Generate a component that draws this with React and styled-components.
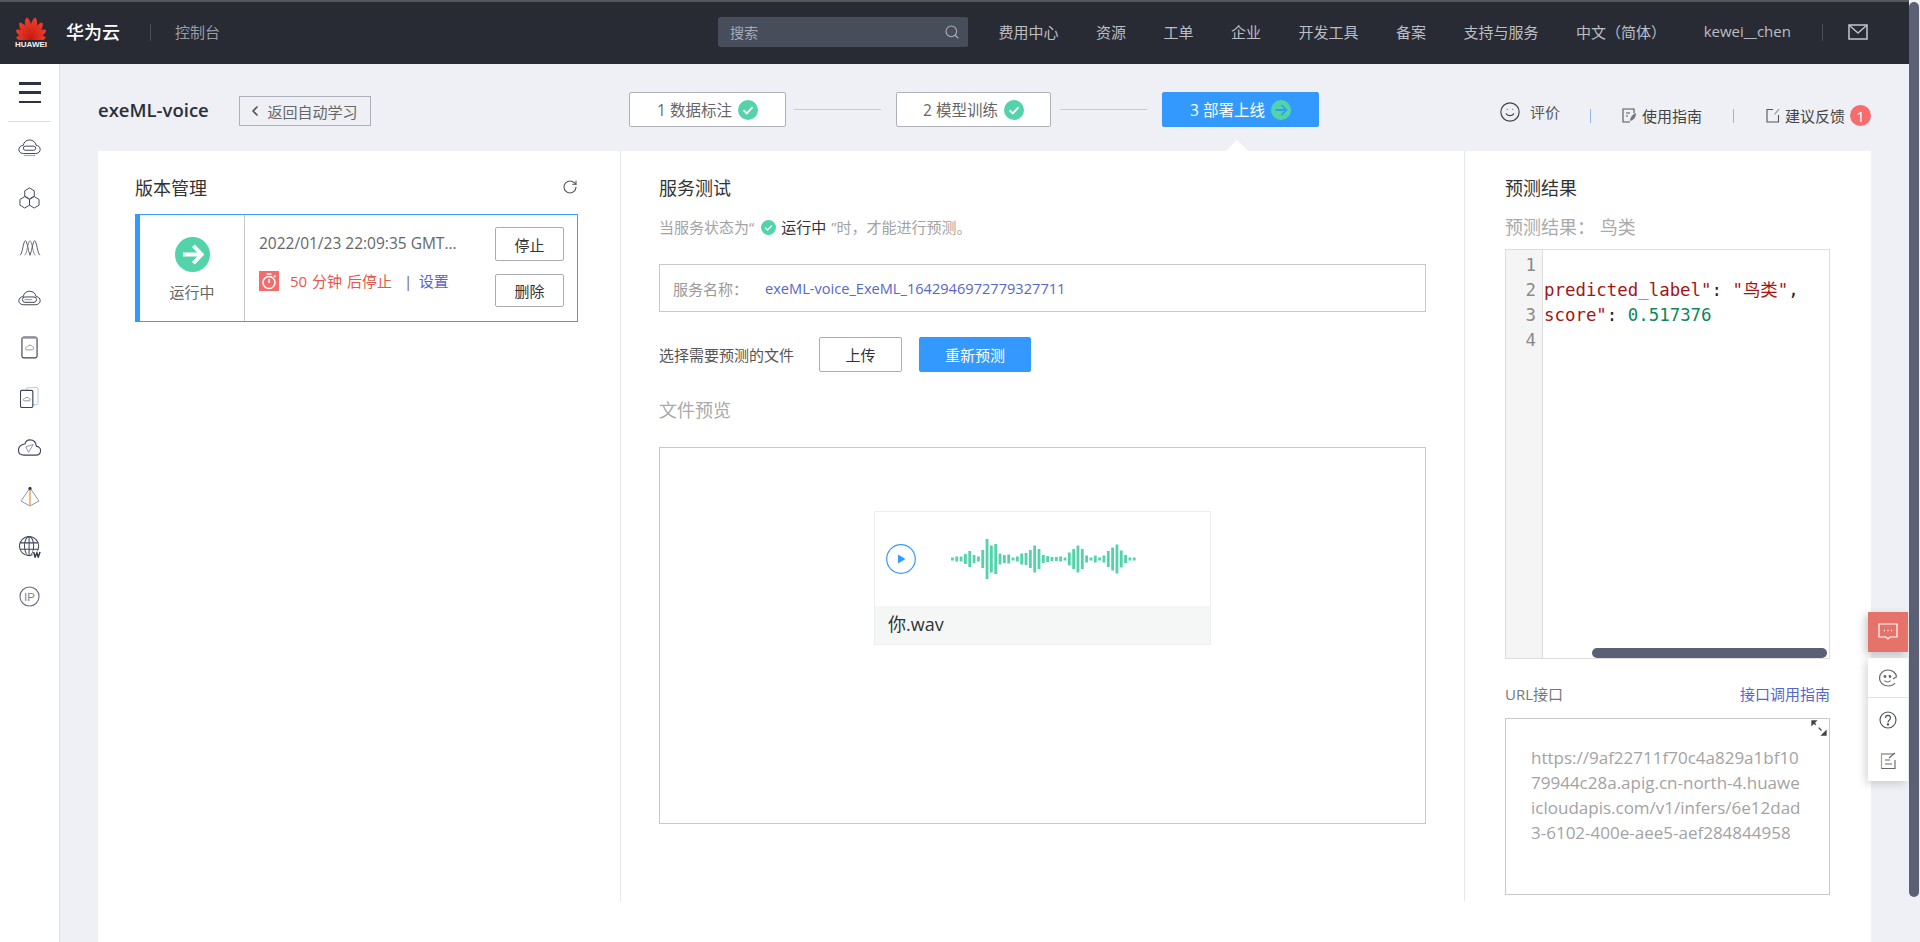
import React from "react";
import styled, { createGlobalStyle } from "styled-components";
import { ChevronLeft, RotateCw, Search, Smile } from "lucide-react";

const Global = createGlobalStyle`
  html, body { margin: 0; padding: 0; height: 942px; overflow: hidden; background: #eef0f5; }
  * { box-sizing: border-box; }
  body { font-family: "Open Sans", "Noto Sans CJK SC", sans-serif; font-size: 15px; color: #333; }
`;

const Frame = styled.div`
  display: flex;
  width: 1920px;
  height: 942px;
  overflow: hidden;
  background: #eef0f5;
`;
const Page = styled.div`
  width: 1909px;
  display: flex;
  flex-direction: column;
`;
const ScrollTrack = styled.div`
  width: 11px;
  padding: 2px 1px 0 0;
  background: #eef0f5;
`;
const ScrollThumb = styled.div`
  height: 895px;
  border-radius: 5px;
  background: #5b6074;
`;

/* top bar */
const TopBar = styled.header`
  height: 64px;
  flex: none;
  display: flex;
  align-items: center;
  background: #282b34;
  border-top: 2px solid #56585c;
  padding: 0 0 2px 15px;
  color: #bcbec4;
  font-size: 15px;
`;
const LogoBox = styled.div`
  width: 32px;
  display: flex;
  flex-direction: column;
  align-items: center;
  color: #f2f2f2;
  font-family: "Liberation Sans", sans-serif;
  font-size: 8px;
  font-weight: 700;
  line-height: 9px;
`;
const Brand = styled.div`
  margin: 0 0 2px 19px;
  width: 56px;
  color: #fff;
  font-size: 18px;
  font-weight: 500;
`;
const TopSep = styled.i`
  width: 1px;
  height: 17px;
  background: #4d505a;
  margin-left: ${(p) => p.$ml || 0}px;
`;
const Console = styled.div`
  margin: 0 0 2px 24px;
  width: 543px;
  color: #9a9ca3;
`;
const SearchBox = styled.div`
  width: 250px;
  height: 30px;
  display: flex;
  align-items: center;
  justify-content: space-between;
  padding: 0 8px 0 12px;
  background: #484d5c;
  border-radius: 2px;
  color: #a6aab5;
  font-size: 14px;
`;
const NavItems = styled.nav`
  display: flex;
  margin: 0 0 2px 30.5px;
  gap: 37.5px;
  white-space: nowrap;
`;
const MailWrap = styled.div`
  margin-left: 25px;
  display: flex;
`;

/* body */
const Body = styled.div`
  flex: 1;
  display: flex;
  min-height: 0;
`;
const Sidebar = styled.aside`
  width: 60px;
  flex: none;
  background: #fff;
  border-right: 1px solid #dcdfe6;
  display: flex;
  flex-direction: column;
  align-items: center;
`;
const Burger = styled.div`
  width: 22px;
  height: 21px;
  margin-top: 18px;
  display: flex;
  flex-direction: column;
  justify-content: space-between;
  i { display: block; height: 2.5px; background: #2c3145; }
`;
const SideRule = styled.div`
  width: 43px;
  height: 1px;
  margin-top: 18px;
  background: #dedfe3;
`;
const SideIcons = styled.div`
  display: flex;
  flex-direction: column;
  align-items: center;
  margin-top: 1px;
`;
const SideIcon = styled.div`
  height: 49.9px;
  display: flex;
  align-items: center;
  justify-content: center;
`;
const Main = styled.main`
  flex: 1;
  padding: 0 38px;
  display: flex;
  flex-direction: column;
  min-width: 0;
`;
const HeadRow = styled.div`
  height: 87px;
  flex: none;
  display: flex;
  align-items: flex-start;
  position: relative;
`;
const TitleGroup = styled.div`
  width: 532px;
  height: 30px;
  margin-top: 32px;
  display: flex;
  align-items: center;
`;
const PageTitle = styled.h1`
  margin: 0 0 4px;
  width: 141px;
  font-size: 18.5px;
  font-weight: 600;
  color: #2b2f3a;
`;
const BackButton = styled.button`
  width: 132px;
  height: 30px;
  padding: 0 5px 0 0;
  border: 1px solid #aeb1b9;
  background: transparent;
  display: flex;
  align-items: center;
  justify-content: center;
  gap: 4px;
  font: inherit;
  font-size: 15px;
  color: #666;
  white-space: nowrap;
`;
const Steps = styled.div`
  margin-top: 28px;
  display: flex;
  align-items: center;
`;
const Step = styled.div`
  width: ${(p) => p.$w}px;
  height: 35px;
  display: flex;
  align-items: center;
  justify-content: center;
  gap: 6px;
  font-size: 15.5px;
  border-radius: 2px;
  color: ${(p) => (p.$active ? "#fff" : "#666")};
  background: ${(p) => (p.$active ? "#3399ff" : "#fff")};
  border: 1px solid ${(p) => (p.$active ? "#3399ff" : "#aeb1b9")};
`;
const StepLine = styled.i`
  width: 87px;
  height: 1px;
  margin: 0 15px 0 ${(p) => p.$l}px;
  background: #c9cbd1;
`;
const Notch = styled.i`
  position: absolute;
  left: 1128px;
  bottom: 0;
  width: 0;
  height: 0;
  border-left: 11px solid transparent;
  border-right: 11px solid transparent;
  border-bottom: 11px solid #fff;
`;
const Actions = styled.div`
  margin-left: 180px;
  margin-top: 41px;
  display: flex;
  align-items: center;
  font-size: 15px;
  color: #555;
  white-space: nowrap;
`;
const ActionRate = styled.span`
  display: flex;
  align-items: center;
  gap: 9px;
  margin-top: -8px;
  margin-right: 30px;
`;
const ActionSep = styled.i`
  width: 1px;
  height: 14px;
  background: #8fb8e8;
  margin-right: ${(p) => p.$r}px;
`;
const ActionLink = styled.span`
  display: flex;
  align-items: center;
  gap: 5px;
  color: #444;
  margin-right: ${(p) => p.$r || 0}px;
`;
const Badge = styled.span`
  width: 21px;
  height: 21px;
  border-radius: 50%;
  background: #f76c6c;
  color: #fff;
  font-size: 15px;
  display: flex;
  align-items: center;
  justify-content: center;
`;
const Card = styled.section`
  flex: 1;
  background: #fff;
`;
const Panels = styled.div`
  height: 750px;
  display: flex;
`;
const Panel = styled.div`
  width: ${(p) => p.$w}px;
  flex: none;
  padding: 0 ${(p) => p.$pr}px 0 ${(p) => p.$pl}px;
  border-right: ${(p) => (p.$divider ? "1px solid #e4e6eb" : "none")};
  display: flex;
  flex-direction: column;
`;
const PanelTitle = styled.div`
  display: flex;
  align-items: center;
  justify-content: space-between;
  height: 24px;
  margin-top: 24px;
  font-size: 18px;
  color: #333;
`;
const VersionCard = styled.div`
  height: 108px;
  margin-top: 15px;
  display: flex;
  border: 1px solid #3b9cff;
  border-left: 5px solid #3399ff;
`;
const StatusCell = styled.div`
  width: 105px;
  flex: none;
  border-right: 1px solid #c8c9cc;
  display: flex;
  flex-direction: column;
  align-items: center;
  padding-top: 22px;
  gap: 10px;
  color: #666;
  font-size: 15px;
  line-height: 20px;
`;
const InfoCell = styled.div`
  width: 250px;
  flex: none;
  padding: 18px 0 0 14px;
`;
const DateText = styled.div`
  height: 20px;
  line-height: 20px;
  font-size: 15.5px;
  color: #666;
  white-space: nowrap;
`;
const TimerRow = styled.div`
  margin-top: 17px;
  display: flex;
  align-items: center;
  color: #e9554a;
  font-size: 15px;
  word-spacing: 1px;
  white-space: nowrap;
`;
const TimerBox = styled.div`
  width: 20px;
  height: 20px;
  margin-right: 11px;
  background: #f66b6b;
  display: flex;
  align-items: center;
  justify-content: center;
`;
const Pipe = styled.span`
  color: #666;
  margin: 0 6.5px 0 12px;
`;
const LinkText = styled.span`
  color: #5667c9;
`;
const ButtonCol = styled.div`
  display: flex;
  flex-direction: column;
  gap: 13px;
  padding-top: 12px;
`;
const Btn = styled.button`
  width: ${(p) => p.$w}px;
  height: ${(p) => p.$h}px;
  padding: 0;
  font: inherit;
  font-size: 15px;
  border-radius: 2px;
  color: ${(p) => (p.$primary ? "#fff" : "#333")};
  background: ${(p) => (p.$primary ? "#3399ff" : "#fff")};
  border: 1px solid ${(p) => (p.$primary ? "#3399ff" : "#a9adb8")};
`;
const Hint = styled.div`
  margin-top: 18px;
  height: 20px;
  line-height: 20px;
  display: flex;
  align-items: center;
  font-size: 15px;
  color: #a3a3a3;
  white-space: pre;
  svg { margin-left: 3px; }
  b { font-weight: 400; color: #333; margin: 0 5px; }
`;
const ServiceBox = styled.div`
  height: 48px;
  margin-top: 27px;
  padding-left: 13px;
  display: flex;
  align-items: center;
  border: 1px solid #c9c9c9;
  color: #999;
  font-size: 15px;
  span { width: 92px; flex: none; }
`;
const ServiceLink = styled.a`
  color: #5667c9;
  font-size: 14.6px;
`;
const UploadRow = styled.div`
  margin-top: 25px;
  display: flex;
  align-items: center;
  gap: 17px;
  color: #555;
  font-size: 15px;
  label { width: 143px; white-space: nowrap; }
`;
const SubTitle = styled.div`
  height: 24px;
  line-height: 24px;
  margin-top: ${(p) => p.$mt}px;
  font-size: 18px;
  color: #aaa;
  white-space: pre;
`;
const PreviewBox = styled.div`
  height: 377px;
  margin-top: 25px;
  border: 1px solid #c9c9c9;
  padding: 63px 0 0 214px;
`;
const AudioCard = styled.div`
  width: 337px;
  height: 134px;
  display: flex;
  flex-direction: column;
  border: 1px solid #eee;
`;
const AudioTop = styled.div`
  height: 94px;
  flex: none;
  display: flex;
  align-items: center;
  padding: 0 0 0 11px;
  gap: 35px;
`;
const AudioName = styled.div`
  flex: 1;
  background: #f5f7f7;
  padding-left: 13px;
  font-size: 18px;
  line-height: 36px;
  color: #333;
`;
const Editor = styled.div`
  position: relative;
  height: 410px;
  margin-top: 10px;
  border: 1px solid #ddd;
  display: flex;
  overflow: hidden;
`;
const Gutter = styled.div`
  width: 37px;
  flex: none;
  padding: 3px 6px 0 0;
  background: #f5f5f5;
  border-right: 1px solid #ddd;
  text-align: right;
  color: #8a8a8a;
`;
const CodeText = styled.div`
  font-family: "DejaVu Sans Mono", "Noto Sans CJK SC", monospace;
  font-size: 17.4px;
  line-height: 25px;
`;
const CodeArea = styled(CodeText)`
  flex: 1;
  padding: 3px 0 0 1px;
  white-space: pre;
  color: #222;
`;
const GutterLine = styled(CodeText)``;
const Key = styled.span`color: #a31515;`;
const Num = styled.span`color: #09885a;`;
const HScroll = styled.div`
  position: absolute;
  left: 86px;
  right: 2px;
  bottom: 0;
  height: 10px;
  border-radius: 5px;
  background: #5b6074;
`;
const UrlHead = styled.div`
  margin-top: 25px;
  height: 20px;
  line-height: 20px;
  display: flex;
  justify-content: space-between;
  color: #777;
  font-size: 15px;
`;
const UrlBox = styled.div`
  position: relative;
  height: 177px;
  margin-top: 14px;
  border: 1px solid #c9c9c9;
  padding: 26px 27px 0 25px;
  font-size: 17px;
  line-height: 25px;
  color: #a3a3a3;
  word-break: break-all;
`;
const ResizeMark = styled.div`
  position: absolute;
  top: -2px;
  right: 2px;
  width: 16px;
  height: 16px;
`;
const FloatPanel = styled.div`
  position: absolute;
  right: 12px;
  top: 612px;
  width: 40px;
  display: flex;
  flex-direction: column;
`;
const FloatRed = styled.div`
  height: 40px;
  background: #e5736a;
  display: flex;
  align-items: center;
  justify-content: center;
  box-shadow: -3px 3px 8px rgba(0,0,0,.2);
`;
const FloatWhite = styled.div`
  margin-top: 6px;
  height: 123px;
  background: #fff;
  display: flex;
  flex-direction: column;
  align-items: center;
  box-shadow: -3px 3px 8px rgba(0,0,0,.15);
`;
const FloatCell = styled.div`
  height: ${(p) => p.$h}px;
  width: 100%;
  display: flex;
  align-items: center;
  justify-content: center;
  border-bottom: ${(p) => (p.$rule ? "1px solid #dfe1e8" : "none")};
`;

const ink = { fill: "none", stroke: "#3e4356", strokeWidth: 1.2 };

const petal = (L, w) =>
  `M16 24 C${16 - w} ${24 - L * 0.55} ${16 - w * 0.75} ${24 - L * 0.88} 16 ${24 - L} C${16 + w * 0.75} ${24 - L * 0.88} ${16 + w} ${24 - L * 0.55} 16 24Z`;

const petals = [
  [-80, 15, 3.6],
  [-56, 18, 4.2],
  [-33, 21, 4.6],
  [-11, 23, 4.6],
  [11, 23, 4.6],
  [33, 21, 4.6],
  [56, 18, 4.2],
  [80, 15, 3.6],
];

const HuaweiLogo = () => (
  <svg width="32" height="24" viewBox="0 0 32 24">
    <defs>
      <linearGradient id="hw" x1="0" y1="0" x2="0" y2="1">
        <stop offset="0" stopColor="#f0402c" />
        <stop offset="1" stopColor="#c4170f" />
      </linearGradient>
    </defs>
    {petals.map(([a, L, w]) => (
      <path key={a} d={petal(L, w)} fill="url(#hw)" transform={`rotate(${a} 16 24)`} />
    ))}
  </svg>
);

const MailIcon = () => (
  <svg width="20" height="16" viewBox="0 0 20 16" fill="none" stroke="#bcbec4" strokeWidth="1.6">
    <rect x="1" y="1" width="18" height="14" />
    <path d="M1.5 1.5 L10 9 L18.5 1.5" />
  </svg>
);

const CheckBadge = ({ size = 20 }) => (
  <svg width={size} height={size} viewBox="0 0 20 20">
    <circle cx="10" cy="10" r="10" fill="#52d3aa" />
    <path d="M5.5 10.2 L8.8 13.4 L14.6 7.2" fill="none" stroke="#fff" strokeWidth="1.8" />
  </svg>
);

const ArrowBadge = ({ size, stroke, sw }) => (
  <svg width={size} height={size} viewBox="0 0 20 20">
    <circle cx="10" cy="10" r="10" fill="#52d3aa" />
    <path d="M4.5 10 H15 M10.5 5 L15.3 10 L10.5 15" fill="none" stroke={stroke} strokeWidth={sw} />
  </svg>
);

const s1 = (
  <svg width="23" height="18" viewBox="1 4.5 28 21.5" {...ink}>
    <path d="M8 22 H22 C26 22 28 19.5 28 17 C28 14 25.5 12 23 12 C22.5 8 19 5.5 15 5.5 C11 5.5 8 8 7.5 12 C4.5 12 2 14.5 2 17 C2 20 4.5 22 8 22Z" />
    <rect x="7.5" y="13" width="15" height="5" rx="2.5" />
    <path d="M8 24.5 H22" stroke="#9aa0ad" />
  </svg>
);
const s2 = (
  <svg width="21" height="22" viewBox="1 1 22 23" {...ink} strokeWidth="1">
    <path d="M12 2 L17 5 V10.5 L12 13.5 L7 10.5 V5Z" />
    <path d="M7 11 L12 14 V20 L7 23 L2 20 V14Z" />
    <path d="M17 11 L22 14 V20 L17 23 L12 20 V14Z" />
  </svg>
);
const s3 = (
  <svg width="22" height="17" viewBox="0 0 26 20" {...ink} strokeWidth="1">
    <path d="M1 19 C4 19 5 2 7.5 2 C10 2 11 19 14 19" />
    <path d="M6.5 19 C9.5 19 10.5 2 13 2 C15.5 2 16.5 19 19.5 19" stroke="#8a6a60" />
    <path d="M12 19 C15 19 16 2 18.500 2 C21 2 22 19 25 19" />
  </svg>
);
const s4 = (
  <svg width="23" height="18" viewBox="1 5.500 28 18.500" {...ink}>
    <path d="M8 23 H22 C26 23 28 20.5 28 18 C28 15 25.5 13 23 13 C22.5 9 19 6.5 15 6.5 C11 6.5 8 9 7.5 13 C4.5 13 2 15.5 2 18 C2 21 4.5 23 8 23Z" />
    <rect x="6.5" y="13.5" width="17" height="6.5" rx="3" />
    <path d="M9 16.7 H18" stroke="#8a90a0" />
  </svg>
);
const s5 = (
  <svg width="17" height="23" viewBox="1 1 18 24" {...ink}>
    <rect x="2" y="2" width="16" height="22" rx="2" />
    <path d="M2 3 H18" stroke="#9aa0ad" strokeWidth="1.5" />
    <path d="M7 15.5 H13 C15 15.5 15 12 13 12 C12.5 10 8.5 10 8 12 C5.5 12 5 15.5 7 15.5Z" stroke="#9a8f8f" strokeWidth="1" />
  </svg>
);
const s6 = (
  <svg width="19" height="21" viewBox="1 0.500 20 22" {...ink}>
    <rect x="8" y="1" width="12" height="18" rx="1.5" stroke="#b8d6ee" />
    <rect x="1.500" y="4" width="13" height="18" rx="1.500" fill="#fff" />
    <path d="M5.500 15 H10.500 C12 15 12 12.500 10.500 12.500 C10 11 6.500 11 6 12.500 C4.500 12.500 4 15 5.500 15Z" strokeWidth="1" stroke="#8a8f9e" />
  </svg>
);
const s7 = (
  <svg width="23" height="17" viewBox="0.500 3 25 17.500" {...ink}>
    <path d="M7 20 H20 C23 20 25 18 25 15 C25 12.500 23 10.500 20.500 10.500 C20 6 17 3.500 13.500 3.500 C10.500 3.500 8.500 6 8 8 C4 8 1 11 1 14.500 C1 18 3.500 20 7 20Z" />
    <path d="M9 11 L17 8.500 L12 17Z" strokeWidth="1" stroke="#8a8f9e" />
  </svg>
);
const s8 = (
  <svg width="20" height="20" viewBox="1 1 20 20" fill="none" stroke="#9096a8" strokeWidth="1">
    <path d="M11 2 L20 15 L11 20 L2 15Z" />
    <path d="M11 3 V19" stroke="#e0933c" strokeWidth="1.200" />
    <circle cx="11" cy="2.500" r="1.600" fill="#333a4d" stroke="none" />
  </svg>
);
const s9 = (
  <svg width="22" height="22" viewBox="0 0 24 24" fill="none" stroke="#3e4356" strokeWidth="1.100">
    <circle cx="11" cy="11" r="10.500" />
    <ellipse cx="11" cy="11" rx="5" ry="10.500" />
    <path d="M11 .5 V21.500 M1 7.500 H21 M1 14.500 H21" />
    <rect x="15" y="16" width="9" height="8" fill="#fff" stroke="none" />
    <path d="M16 17.500 L17.500 23 L19.500 18.500 L21 23 L23 17.500" strokeWidth="1.500" stroke="#2f3445" />
  </svg>
);
const s10 = (
  <svg width="21" height="21" viewBox="0 0 22 22">
    <circle cx="11" cy="11" r="10" fill="none" stroke="#6b7080" strokeWidth="1.200" />
    <text x="11" y="15.500" textAnchor="middle" fontFamily="Liberation Sans" fontSize="12" fill="#7f8390">IP</text>
  </svg>
);

const sideIcons = [s1, s2, s3, s4, s5, s6, s7, s8, s9, s10];

const waveHeights = [3,5,5,10,16,8,5,18,40,27,30,11,8,9,3,5,11,12,18,27,20,8,6,4,4,5,3,13,20,27,20,7,3,7,3,7,16,23,29,17,8,3,3];

const Wave = () => (
  <svg width="186" height="42" viewBox="0 0 186 42">
    {waveHeights.map((h, i) => (
      <rect key={i} x={i * 4.33} y={21 - h / 2} width="2.800" height={h} fill="#52d3aa" />
    ))}
  </svg>
);

const navItems = ["费用中心", "资源", "工单", "企业", "开发工具", "备案", "支持与服务", "中文（简体）", "kewei__chen"];

export default function App() {
  return (
    <Frame>
      <Global />
      <Page>
        <TopBar>
          <LogoBox>
            <HuaweiLogo />
            HUAWEI
          </LogoBox>
          <Brand>华为云</Brand>
          <TopSep $ml={28} />
          <Console>控制台</Console>
          <SearchBox>
            搜索
            <Search size={16} strokeWidth={1.6} color="#aeb2bc" />
          </SearchBox>
          <NavItems>
            {navItems.map((n) => (
              <span key={n}>{n}</span>
            ))}
          </NavItems>
          <TopSep $ml={31} />
          <MailWrap>
            <MailIcon />
          </MailWrap>
        </TopBar>
        <Body>
          <Sidebar>
            <Burger>
              <i />
              <i />
              <i />
            </Burger>
            <SideRule />
            <SideIcons>
              {sideIcons.map((ic, i) => (
                <SideIcon key={i}>{ic}</SideIcon>
              ))}
            </SideIcons>
          </Sidebar>
          <Main>
            <HeadRow>
              <TitleGroup>
                <PageTitle>exeML-voice</PageTitle>
                <BackButton>
                  <ChevronLeft size={16} strokeWidth={2.6} color="#555" />
                  返回自动学习
                </BackButton>
              </TitleGroup>
              <Steps>
                <Step $w={157}>
                  1 数据标注 <CheckBadge />
                </Step>
                <StepLine $l={8} />
                <Step $w={155}>
                  2 模型训练 <CheckBadge />
                </Step>
                <StepLine $l={9} />
                <Step $w={157} $active>
                  3 部署上线 <ArrowBadge size={20} stroke="#3399ff" sw={1.800} />
                </Step>
              </Steps>
              <Notch />
              <Actions>
                <ActionRate>
                  <Smile size={22} strokeWidth={1.300} color="#444" />
                  评价
                </ActionRate>
                <ActionSep $r={31} />
                <ActionLink $r={31}>
                  <svg width="15" height="15" viewBox="0 0 15 15" fill="none" stroke="#555" strokeWidth="1.100">
                    <path d="M12 5 V1 H1 V14 H8" />
                    <path d="M4 5 H8 M4 8 H6" />
                    <path d="M8 13 C8 9 11 6 14 5 C14 9 12 12 8 13Z" fill="#777" stroke="none" />
                  </svg>
                  使用指南
                </ActionLink>
                <ActionSep $r={32} />
                <ActionLink>
                  <svg width="14" height="15" viewBox="0 0 14 15" fill="none" stroke="#555" strokeWidth="1.100">
                    <path d="M7 1.500 H1 V14 H12.500 V7" />
                    <path d="M8.500 6.500 L13 1" stroke="#888" />
                  </svg>
                  建议反馈
                  <Badge>1</Badge>
                </ActionLink>
              </Actions>
            </HeadRow>
            <Card>
              <Panels>
                <Panel $w={523} $pl={37} $pr={42} $divider>
                  <PanelTitle>
                    版本管理
                    <RotateCw size={16} strokeWidth={1.600} color="#555" />
                  </PanelTitle>
                  <VersionCard>
                    <StatusCell>
                      <ArrowBadge size={35} stroke="#fff" sw={2.200} />
                      运行中
                    </StatusCell>
                    <InfoCell>
                      <DateText>2022/01/23 22:09:35 GMT...</DateText>
                      <TimerRow>
                        <TimerBox>
                          <svg width="16" height="18" viewBox="0 0 16 18" fill="none" stroke="#fff" strokeWidth="1.600">
                            <circle cx="8" cy="10.500" r="6" />
                            <path d="M5.500 2 H10.500 M8 7 V11 M13 3.500 L14.500 5" />
                          </svg>
                        </TimerBox>
                        50 分钟 后停止
                        <Pipe>|</Pipe>
                        <LinkText>设置</LinkText>
                      </TimerRow>
                    </InfoCell>
                    <ButtonCol>
                      <Btn $w={69} $h={34}>停止</Btn>
                      <Btn $w={69} $h={33}>删除</Btn>
                    </ButtonCol>
                  </VersionCard>
                </Panel>
                <Panel $w={844} $pl={38} $pr={38} $divider>
                  <PanelTitle>服务测试</PanelTitle>
                  <Hint>
                    当服务状态为“ <CheckBadge size={15} />
                    <b>运行中</b>”时，才能进行预测。
                  </Hint>
                  <ServiceBox>
                    <span>服务名称：</span>
                    <ServiceLink>exeML-voice_ExeML_1642946972779327711</ServiceLink>
                  </ServiceBox>
                  <UploadRow>
                    <label>选择需要预测的文件</label>
                    <Btn $w={83} $h={35}>上传</Btn>
                    <Btn $w={112} $h={35} $primary>重新预测</Btn>
                  </UploadRow>
                  <SubTitle $mt={26}>文件预览</SubTitle>
                  <PreviewBox>
                    <AudioCard>
                      <AudioTop>
                        <svg width="30" height="30" viewBox="0 0 30 30">
                          <circle cx="15" cy="15" r="14.300" fill="none" stroke="#3399ff" strokeWidth="1.200" />
                          <path d="M12 10.500 L19.500 15 L12 19.500Z" fill="#3399ff" />
                        </svg>
                        <Wave />
                      </AudioTop>
                      <AudioName>你.wav</AudioName>
                    </AudioCard>
                  </PreviewBox>
                </Panel>
                <Panel $w={406} $pl={40} $pr={41}>
                  <PanelTitle>预测结果</PanelTitle>
                  <SubTitle $mt={16}>预测结果： 鸟类</SubTitle>
                  <Editor>
                    <Gutter>
                      {[1, 2, 3, 4].map((n) => (
                        <GutterLine key={n}>{n}</GutterLine>
                      ))}
                    </Gutter>
                    <CodeArea>
                      {"\n"}
                      <Key>predicted_label"</Key>: <Key>"鸟类"</Key>,{"\n"}
                      <Key>score"</Key>: <Num>0.517376</Num>
                    </CodeArea>
                    <HScroll />
                  </Editor>
                  <UrlHead>
                    URL接口
                    <LinkText>接口调用指南</LinkText>
                  </UrlHead>
                  <UrlBox>
                    https://9af22711f70c4a829a1bf1079944c28a.apig.cn-north-4.huaweicloudapis.com/v1/infers/6e12dad3-6102-400e-aee5-aef284844958
                    <ResizeMark>
                      <svg width="16" height="16" viewBox="0 0 16 16" fill="none" stroke="#444" strokeWidth="1.300">
                        <path d="M2 2 L14 14" strokeDasharray="4 4" />
                        <path d="M1 5 V1 H5 Z M15 11 V15 H11 Z" fill="#444" />
                      </svg>
                    </ResizeMark>
                  </UrlBox>
                </Panel>
              </Panels>
            </Card>
          </Main>
        </Body>
      </Page>
      <ScrollTrack>
        <ScrollThumb />
      </ScrollTrack>
      <FloatPanel>
        <FloatRed>
          <svg width="20" height="18" viewBox="0 0 20 18" fill="none" stroke="#fff" strokeWidth="1.200">
            <path d="M1 1 H19 V14 H12 L10 16 L8 14 H1Z" />
            <path d="M6 7.500 H7 M9.500 7.500 H10.500 M13 7.500 H14" strokeWidth="1.500" />
          </svg>
        </FloatRed>
        <FloatWhite>
          <FloatCell $h={40} $rule>
            <svg width="20" height="18" viewBox="0 0 20 18" fill="none" stroke="#666" strokeWidth="1.200">
              <path d="M17 14 C15 16.500 12.500 17 10 17 C5 17 1.500 13.500 1.500 9 C1.500 4.500 5 1 10 1 C14.500 1 18 4 18.500 7.500" />
              <path d="M15 10 L19 7.500" />
              <circle cx="7" cy="7.500" r=".8" fill="#666" />
              <circle cx="12" cy="7.500" r=".8" fill="#666" />
              <path d="M6.500 11.500 C8 13.500 11 13.500 12.500 11.500" />
            </svg>
          </FloatCell>
          <FloatCell $h={44}>
            <svg width="18" height="18" viewBox="0 0 18 18" fill="none" stroke="#4a4f60" strokeWidth="1.100">
              <circle cx="9" cy="9" r="8" />
              <path d="M6.500 7 C6.500 3.500 11.500 3.500 11.500 7 C11.500 9 9 9 9 11.500" />
              <circle cx="9" cy="13.500" r=".6" fill="#4a4f60" />
            </svg>
          </FloatCell>
          <FloatCell $h={38}>
            <svg width="17" height="18" viewBox="0 0 17 18" fill="none" stroke="#666" strokeWidth="1.100">
              <path d="M14 2 H1.500 V16.500 H15 V8" />
              <path d="M1.500 2 V16.500" stroke="#e0933c" />
              <path d="M5 8 H10 M5 12 H12 M9 6 L15 1" />
            </svg>
          </FloatCell>
        </FloatWhite>
      </FloatPanel>
    </Frame>
  );
}
